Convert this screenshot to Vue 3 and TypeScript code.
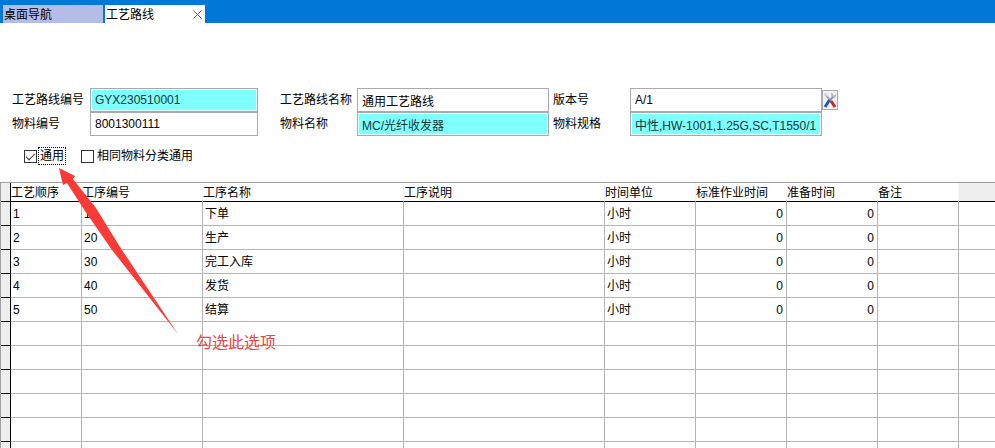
<script setup lang="ts">
import { ref } from 'vue'

interface Field {
  id: string
  label: string
  value: string
  filled?: boolean
  picker?: boolean
}

interface Step {
  order: string
  code: string
  name: string
  description: string
  unit: string
  standard: string
  setup: string
  remark: string
}

const fields = ref<Field[]>([
  { id: 'route-code', label: '工艺路线编号', value: 'GYX230510001', filled: true },
  { id: 'route-name', label: '工艺路线名称', value: '通用工艺路线' },
  { id: 'version', label: '版本号', value: 'A/1', picker: true },
  { id: 'item-code', label: '物料编号', value: '8001300111' },
  { id: 'item-name', label: '物料名称', value: 'MC/光纤收发器', filled: true },
  { id: 'item-spec', label: '物料规格', value: '中性,HW-1001,1.25G,SC,T1550/1', filled: true },
])

const general = ref(true)
const sameCategory = ref(false)

const columns = ['工艺顺序', '工序编号', '工序名称', '工序说明', '时间单位', '标准作业时间', '准备时间', '备注']

const steps: Step[] = ['下单', '生产', '完工入库', '发货', '结算'].map((name, i) => ({
  order: String(i + 1),
  code: String((i + 1) * 10),
  name,
  description: '',
  unit: '小时',
  standard: '0',
  setup: '0',
  remark: '',
}))

const blankRows = 6
</script>

<template>
  <div class="page">
    <nav class="tabs">
      <a class="tab" href="#desktop">桌面导航</a>
      <div class="tab active">
        <a href="#route">工艺路线</a>
        <button class="close" type="button" aria-label="关闭">
          <svg viewBox="0 0 9 9" width="9" height="9">
            <path d="M.5 .5L8.5 8.5M8.5 .5L.5 8.5" fill="none" stroke="#50657c" />
          </svg>
        </button>
      </div>
    </nav>

    <form class="form" @submit.prevent>
      <div class="fields">
        <template v-for="f in fields" :key="f.id">
          <label :for="f.id">{{ f.label }}</label>
          <div class="control">
            <input :id="f.id" v-model="f.value" type="text" :class="{ filled: f.filled }" />
            <button v-if="f.picker" class="picker" type="button" aria-label="设置">
              <svg viewBox="0 0 14 18" width="14" height="18">
                <path d="M2 3L8 10" stroke="#a3acb8" stroke-width="2" />
                <path d="M2 2L4 5" stroke="#d5d9df" stroke-width="2" />
                <path d="M8 10L12 16" stroke="#c3272e" stroke-width="3" />
                <path d="M11 5L6 10" stroke="#8e99a8" stroke-width="2" />
                <path d="M9 2V5L11 6L13 4" fill="none" stroke="#a9b1bc" stroke-width="1.5" />
                <path d="M6.5 9L2 16" stroke="#2257b8" stroke-width="3" />
              </svg>
            </button>
          </div>
        </template>
      </div>
      <div class="checks">
        <label class="check"><input v-model="general" type="checkbox" /><span class="focus">通用</span></label>
        <label class="check"><input v-model="sameCategory" type="checkbox" /><span>相同物料分类通用</span></label>
      </div>
    </form>

    <table class="grid">
      <colgroup>
        <col class="w-mark" />
        <col class="w-order" />
        <col class="w-code" />
        <col class="w-wide" />
        <col class="w-wide" />
        <col class="w-mid" />
        <col class="w-mid" />
        <col class="w-mid" />
        <col class="w-remark" />
        <col />
      </colgroup>
      <thead>
        <tr>
          <td class="mark"></td>
          <th v-for="c in columns" :key="c" scope="col">{{ c }}</th>
          <td class="rest"></td>
        </tr>
      </thead>
      <tbody>
        <tr v-for="s in steps" :key="s.code">
          <td class="mark"></td>
          <td>{{ s.order }}</td>
          <td>{{ s.code }}</td>
          <td>{{ s.name }}</td>
          <td>{{ s.description }}</td>
          <td>{{ s.unit }}</td>
          <td class="num">{{ s.standard }}</td>
          <td class="num">{{ s.setup }}</td>
          <td>{{ s.remark }}</td>
          <td class="rest"></td>
        </tr>
        <tr v-for="n in blankRows" :key="n">
          <td class="mark"></td>
          <td v-for="c in columns" :key="c"></td>
          <td class="rest"></td>
        </tr>
      </tbody>
    </table>

    <svg class="arrow" viewBox="0 0 120 168" width="120" height="168" aria-hidden="true">
      <path d="M0 1L16 9L14 12L37 41L61 80L119 167L53 83L26 44L8 16L4 18Z" fill="#f93a37" />
    </svg>
    <p class="note">勾选此选项</p>
  </div>
</template>

<style>
body {
  margin: 0;
  background: #fff;
}
</style>

<style scoped>
.page {
  position: relative;
  height: 100vh;
  overflow: hidden;
  color: #000;
  font: 12px/16px "Liberation Sans", "Noto Sans CJK SC", sans-serif;
}

.tabs {
  display: flex;
  gap: 2px;
  height: 18px;
  padding: 5px 3px 0;
  background: #0078d7;
}

.tab {
  display: flex;
  align-items: center;
  justify-content: space-between;
  box-sizing: border-box;
  width: 100px;
  padding: 1px 3px 0 1px;
  background: #b4bce8;
  color: #000;
  text-decoration: none;
}

.tab a {
  color: #000;
  text-decoration: none;
}

.tab.active {
  background: #fff;
}

.close {
  display: flex;
  padding: 0;
  border: 0;
  background: none;
}

.form {
  padding: 65px 12px 17px;
}

.fields {
  display: grid;
  grid-template-columns: 78px 190px 77px 196px 77px 208px;
  grid-auto-rows: 24px;
  align-items: center;
}

.control {
  display: flex;
  align-items: center;
}

.control input {
  box-sizing: border-box;
  width: 192px;
  height: 24px;
  padding: 0 4px;
  border: 1px solid #a9a9b0;
  border-radius: 0;
  background: #fff;
  color: #000;
  font: inherit;
}

#route-code,
#item-code {
  width: 168px;
}

.control input.filled {
  background: #80ffff;
  box-shadow: inset 0 0 0 1px #e4ffff;
  color: #103838;
}

.picker {
  display: flex;
  padding: 0;
  border: 1px solid #a9a9b0;
  background: #f1f1f1;
}

.checks {
  display: flex;
  gap: 15px;
  padding: 11px 12px 0;
}

.check {
  display: flex;
  align-items: center;
  gap: 1px;
}

.check input {
  display: grid;
  place-items: center;
  box-sizing: border-box;
  width: 13px;
  height: 13px;
  margin: 0;
  appearance: none;
  border: 1px solid #333;
  background: #fff;
}

.check input:checked::after {
  width: 9px;
  height: 5px;
  box-sizing: border-box;
  border: solid #333;
  border-width: 0 0 1px 1px;
  content: "";
  transform: translateY(-1px) rotate(-45deg);
}

.check span {
  padding: 0 2px;
}

.check .focus {
  padding: 0 1px;
  border: 1px dotted #000;
}

.grid {
  width: 100%;
  table-layout: fixed;
  border-collapse: separate;
  border-spacing: 0;
  border-top: 1px solid #a0a0a0;
  border-left: 1px solid #a0a0a0;
}

.w-mark { width: 10px; }
.w-order { width: 71px; }
.w-code { width: 121px; }
.w-wide { width: 201px; }
.w-mid { width: 91px; }
.w-remark { width: 81px; }

.grid th,
.grid td {
  box-sizing: border-box;
  height: 24px;
  padding: 0 3px 0 2px;
  overflow: hidden;
  border-right: 1px solid #b4b4b4;
  border-bottom: 1px solid #b4b4b4;
  text-align: left;
  font-weight: 400;
  white-space: nowrap;
}

.grid thead th,
.grid thead td {
  height: 19px;
  padding: 1px 0 0;
  border-right-color: #f4f4f4;
  border-bottom-color: #000;
}

.grid td.num {
  text-align: right;
}

.grid td.mark {
  padding: 0;
  border-color: #000;
  background: #eee;
}

.grid td.rest {
  border-right: 0;
}

.grid thead td.rest {
  background: #eee;
}

.arrow {
  position: absolute;
  top: 167px;
  left: 59px;
}

.note {
  position: absolute;
  top: 331px;
  left: 196px;
  margin: 0;
  color: #ef4444;
  font-size: 16px;
  line-height: 24px;
}
</style>
